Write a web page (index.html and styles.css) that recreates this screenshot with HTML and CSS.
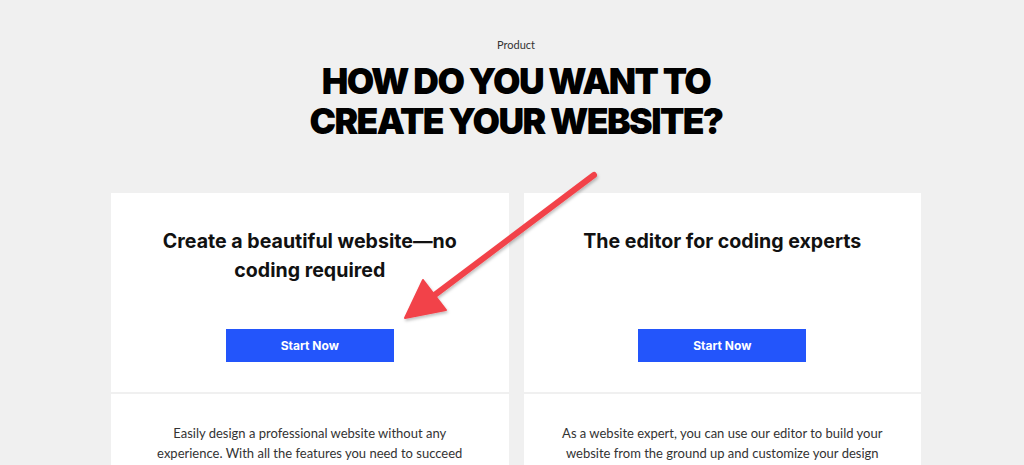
FILE: index.html
```html
<!DOCTYPE html>
<html>
<head>
<meta charset="utf-8">
<link rel="stylesheet" href="styles.css">
</head>
<body>
<div class="page">
  <header class="intro">
    <div class="eyebrow">Product</div>
    <h1 class="title">HOW DO YOU WANT TO<br>CREATE YOUR WEBSITE?</h1>
  </header>
  <div class="cards">
    <div class="card">
      <div class="card-top">
        <h2 class="card-title">Create a beautiful website—no coding required</h2>
        <a class="btn">Start Now</a>
      </div>
      <div class="card-bottom">
        <p class="card-text">Easily design a professional website without any experience. With all the features you need to succeed</p>
      </div>
    </div>
    <div class="card">
      <div class="card-top">
        <h2 class="card-title">The editor for coding experts</h2>
        <a class="btn">Start Now</a>
      </div>
      <div class="card-bottom">
        <p class="card-text">As a website expert, you can use our editor to build your website from the ground up and customize your design</p>
      </div>
    </div>
  </div>
  <svg class="arrow" width="1024" height="465" viewBox="0 0 1024 465">
    <defs>
      <filter id="sh" x="-20%" y="-20%" width="140%" height="140%">
        <feDropShadow dx="1" dy="2" stdDeviation="1.5" flood-color="#000" flood-opacity="0.25"/>
      </filter>
    </defs>
    <g filter="url(#sh)" fill="#f2434a" stroke="#f2434a" stroke-linecap="round" stroke-linejoin="round">
      <line x1="594" y1="175" x2="432" y2="297" stroke-width="6"/>
      <polygon points="405,318 423,280 446,310" stroke-width="2"/>
    </g>
  </svg>
</div>
</body>
</html>
```
FILE: styles.css
```css
html, body {
  margin: 0;
  padding: 0;
}
body {
  background: #f0f0f0;
  font-family: "Lato", "Liberation Sans", sans-serif;
  color: #111;
  width: 1024px;
  height: 465px;
  overflow: hidden;
}
.page {
  position: relative;
  width: 810px;
  margin-left: 111px;
  padding-top: 38px;
}
.intro {
  text-align: center;
}
.eyebrow {
  font-size: 11px;
  color: #333;
  line-height: 14px;
}
.title {
  margin: 10px 0 0;
  font-family: "Inter", "Liberation Sans", sans-serif;
  font-weight: 900;
  font-size: 35.5px;
  line-height: 40px;
  letter-spacing: -1.6px;
  color: #000;
}
.cards {
  display: grid;
  grid-template-columns: 1fr 1fr;
  column-gap: 15px;
  margin-top: 51px;
}
.card {
  display: flex;
  flex-direction: column;
  gap: 2px;
}
.card-top {
  background: #fff;
  height: 199px;
  display: flex;
  flex-direction: column;
  align-items: center;
  padding-top: 34px;
  box-sizing: border-box;
}
.card-title {
  margin: 0;
  width: 330px;
  text-align: center;
  font-family: "Inter", "Liberation Sans", sans-serif;
  font-size: 19.6px;
  line-height: 29px;
  font-weight: 700;
  color: #111;
  height: 102px;
}
.btn {
  display: flex;
  align-items: center;
  justify-content: center;
  width: 168px;
  height: 33px;
  background: #2355fb;
  color: #fff;
  font-family: "Inter", "Liberation Sans", sans-serif;
  font-size: 12px;
  font-weight: 700;
}
.card-bottom {
  background: #fff;
  height: 200px;
  padding-top: 30px;
  box-sizing: border-box;
}
.card-text {
  margin: 0 auto;
  width: 336px;
  text-align: center;
  font-size: 13px;
  line-height: 19.5px;
  color: #333;
}
.arrow {
  position: absolute;
  left: -111px;
  top: 0;
  pointer-events: none;
}
```
